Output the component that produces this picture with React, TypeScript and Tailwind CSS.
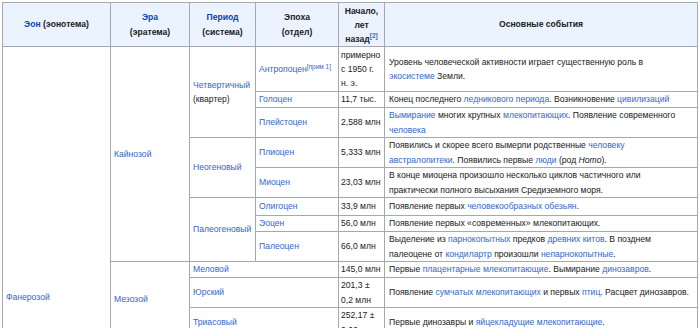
const A = ({ children }: { children: React.ReactNode }) => (
  <a className="text-[#3366cc]">{children}</a>
);

const Ref = ({ children }: { children: React.ReactNode }) => (
  <sup className="text-[#3366cc] text-[6.5px] leading-none">{children}</sup>
);

const cell = "bg-white flex flex-col justify-center px-[3px]";
const num = "bg-white flex flex-col justify-center pl-[2px] pr-px whitespace-nowrap";
const ev = "bg-white flex flex-col justify-center pl-[4px] pr-[3px] whitespace-nowrap";
const head = "bg-[#eaf3ff] flex flex-col justify-center items-center text-center font-bold px-[3px] whitespace-nowrap";

function App() {
  return (
    <div className="h-[328px] w-[700px] overflow-hidden bg-white">
      <div
        className="ml-[2px] mt-[2px] w-fit grid gap-px p-px bg-[#a2a9b1] text-[#202122] text-[8.6px] leading-[14.5px] grid-cols-[107px_78px_65px_82px_45px_312px] grid-rows-[43px_44px_15px_29px_29px_29px_17px_15px_29px_15px_29px_29px_34px_34px_34px_34px_34px_34px]"
        style={{ fontFamily: '"Liberation Sans", Arial, sans-serif' }}
      >
        {/* header */}
        <div className={head}>
          <p>
            <a className="text-[#0645ad]">Эон</a> (эонотема)
          </p>
        </div>
        <div className={head}>
          <a className="text-[#0645ad]">Эра</a>
          <p>(эратема)</p>
        </div>
        <div className={head}>
          <a className="text-[#0645ad]">Период</a>
          <p>(система)</p>
        </div>
        <div className={head}>
          <p>Эпоха</p>
          <p>(отдел)</p>
        </div>
        <div className={head + " leading-[14px]"}>
          <p>Начало,</p>
          <p>лет</p>
          <p>
            назад<Ref>[2]</Ref>
          </p>
        </div>
        <div className={head}>Основные события</div>

        {/* row 1 */}
        <div className={cell + " row-span-17"}>
          <A>Фанерозой</A>
        </div>
        <div className={cell + " row-span-8"}>
          <A>Кайнозой</A>
        </div>
        <div className={cell + " row-span-3"}>
          <A>Четвертичный</A>
          <p>(квартер)</p>
        </div>
        <div className={cell + " whitespace-nowrap"}>
          <p>
            <A>Антропоцен</A>
            <Ref>[прим 1]</Ref>
          </p>
        </div>
        <div className={num + " leading-[14px]"}>
          <p>примерно</p>
          <p>с 1950 г.</p>
          <p>н. э.</p>
        </div>
        <div className={ev}>
          <p>Уровень человеческой активности играет существенную роль в</p>
          <p>
            <A>экосистеме</A> Земли.
          </p>
        </div>

        {/* row 2 */}
        <div className={cell}>
          <A>Голоцен</A>
        </div>
        <div className={num}>11,7 тыс.</div>
        <div className={ev}>
          <p>
            Конец последнего <A>ледникового периода</A>. Возникновение <A>цивилизаций</A>
          </p>
        </div>

        {/* row 3 */}
        <div className={cell}>
          <A>Плейстоцен</A>
        </div>
        <div className={num}>2,588 млн</div>
        <div className={ev}>
          <p>
            <A>Вымирание</A> многих крупных <A>млекопитающих</A>. Появление современного
          </p>
          <p>
            <A>человека</A>
          </p>
        </div>

        {/* row 4 */}
        <div className={cell + " row-span-2"}>
          <A>Неогеновый</A>
        </div>
        <div className={cell}>
          <A>Плиоцен</A>
        </div>
        <div className={num}>5,333 млн</div>
        <div className={ev}>
          <p>
            Появились и скорее всего вымерли родственные <A>человеку</A>
          </p>
          <p>
            <A>австралопитеки</A>. Появились первые <A>люди</A> (род <i>Homo</i>).
          </p>
        </div>

        {/* row 5 */}
        <div className={cell}>
          <A>Миоцен</A>
        </div>
        <div className={num}>23,03 млн</div>
        <div className={ev}>
          <p>В конце миоцена произошло несколько циклов частичного или</p>
          <p>практически полного высыхания Средиземного моря.</p>
        </div>

        {/* row 6 */}
        <div className={cell + " row-span-3"}>
          <A>Палеогеновый</A>
        </div>
        <div className={cell}>
          <A>Олигоцен</A>
        </div>
        <div className={num}>33,9 млн</div>
        <div className={ev}>
          <p>
            Появление первых <A>человекообразных обезьян</A>.
          </p>
        </div>

        {/* row 7 */}
        <div className={cell}>
          <A>Эоцен</A>
        </div>
        <div className={num}>56,0 млн</div>
        <div className={ev}>
          <p>Появление первых «современных» млекопитающих.</p>
        </div>

        {/* row 8 */}
        <div className={cell}>
          <A>Палеоцен</A>
        </div>
        <div className={num}>66,0 млн</div>
        <div className={ev}>
          <p>
            Выделение из <A>парнокопытных</A> предков <A>древних китов</A>. В позднем
          </p>
          <p>
            палеоцене от <A>кондилартр</A> произошли <A>непарнокопытные</A>.
          </p>
        </div>

        {/* row 9 - mesozoic */}
        <div className={cell + " row-span-3"}>
          <A>Мезозой</A>
        </div>
        <div className={cell + " col-span-2"}>
          <A>Меловой</A>
        </div>
        <div className={num}>145,0 млн</div>
        <div className={ev}>
          <p>
            Первые <A>плацентарные млекопитающие</A>. Вымирание <A>динозавров</A>.
          </p>
        </div>

        {/* row 10 */}
        <div className={cell + " col-span-2"}>
          <A>Юрский</A>
        </div>
        <div className={num}>
          <p>201,3 ±</p>
          <p>0,2 млн</p>
        </div>
        <div className={ev}>
          <p>
            Появление <A>сумчатых млекопитающих</A> и первых <A>птиц</A>. Расцвет динозавров.
          </p>
        </div>

        {/* row 11 */}
        <div className={cell + " col-span-2"}>
          <A>Триасовый</A>
        </div>
        <div className={num}>
          <p>252,17 ±</p>
          <p>0,06 млн</p>
        </div>
        <div className={ev}>
          <p>
            Первые динозавры и <A>яйцекладущие млекопитающие</A>.
          </p>
        </div>

        {/* paleozoic, below the fold */}
        <div className={cell + " row-span-6"}>
          <A>Палеозой</A>
        </div>
        {[
          ["Пермский", "298,9 млн", "Массовое пермское вымирание."],
          ["Каменноугольный", "358,9 млн", "Появление деревьев и рептилий."],
          ["Девонский", "419,2 млн", "Появление земноводных."],
          ["Силурийский", "443,8 млн", "Выход жизни на сушу."],
          ["Ордовикский", "485,4 млн", "Появление рыб."],
          ["Кембрийский", "541,0 млн", "Кембрийский взрыв."],
        ].map(([p, d, e]) => (
          <div key={p} className="contents">
            <div className={cell + " col-span-2"}>
              <A>{p}</A>
            </div>
            <div className={num}>{d}</div>
            <div className={ev}>{e}</div>
          </div>
        ))}
      </div>
    </div>
  );
}

export default App;
